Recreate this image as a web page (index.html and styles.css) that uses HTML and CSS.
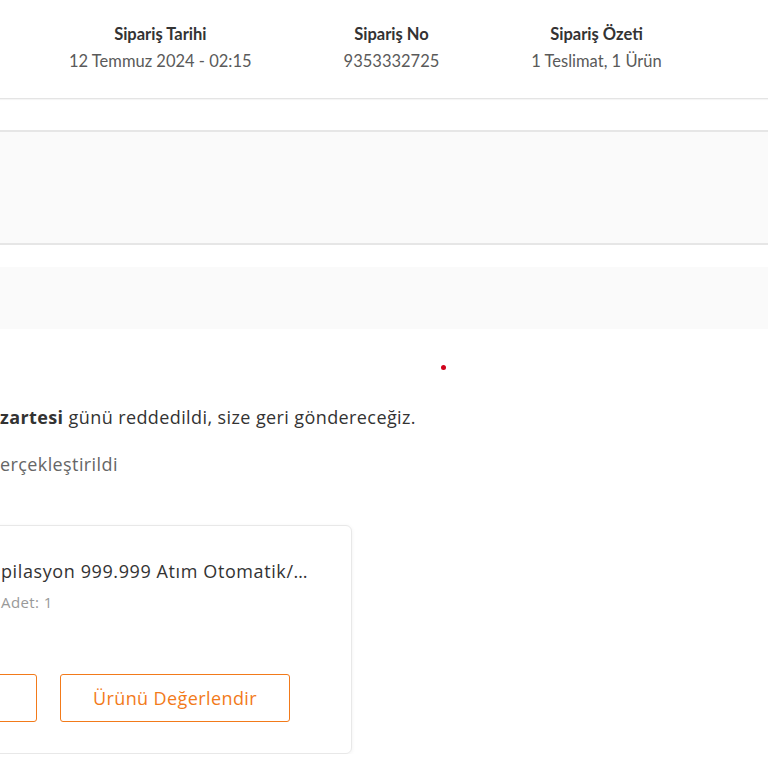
FILE: index.html
```html
<!DOCTYPE html>
<html lang="tr">
<head>
<meta charset="utf-8">
<link rel="stylesheet" href="styles.css">
</head>
<body>
<header class="order-head">
  <div class="info">
    <div class="info-title">Sipariş Tarihi</div>
    <div class="info-value">12 Temmuz 2024 - 02:15</div>
  </div>
  <div class="info">
    <div class="info-title">Sipariş No</div>
    <div class="info-value">9353332725</div>
  </div>
  <div class="info">
    <div class="info-title">Sipariş Özeti</div>
    <div class="info-value">1 Teslimat, 1 Ürün</div>
  </div>
</header>

<section class="panel-bordered"></section>
<section class="panel-plain"></section>

<div class="status-dot-row"><span class="status-dot"></span></div>

<p class="status-text"><b>zartesi</b> günü reddedildi, size geri göndereceğiz.</p>
<p class="status-sub">erçekleştirildi</p>

<div class="product-card">
  <div class="product-info">
    <div class="product-name">pilasyon 999.999 Atım Otomatik/…</div>
    <div class="product-qty">Adet: 1</div>
  </div>
  <div class="product-actions">
    <button class="btn-outline"></button>
    <button class="btn-outline">Ürünü Değerlendir</button>
  </div>
</div>
</body>
</html>
```

FILE: styles.css
```css
* { box-sizing: border-box; }
html, body { margin: 0; padding: 0; background: #fff; }
body {
  font-family: "Open Sans", Arial, sans-serif;
  color: #333;
  width: 768px;
  overflow: hidden;
}

.order-head {
  display: flex;
  gap: 92px;
  padding: 23px 0 26px 69px;
  border-bottom: 1px solid #e4e4e4;
  box-shadow: 0 1px 1px rgba(0,0,0,0.04);
  font-family: Lato, "Open Sans", Arial, sans-serif;
}
.info { text-align: center; }
.info-title {
  font-size: 16.5px;
  font-weight: 700;
  line-height: 22px;
  color: #333;
}
.info-value {
  margin-top: 5px;
  font-size: 16.5px;
  line-height: 22px;
  color: #5a5a5a;
}

.panel-bordered {
  margin-top: 31px;
  height: 115px;
  background: #fafafa;
  border-top: 2px solid #e6e6e6;
  border-bottom: 2px solid #e6e6e6;
}
.panel-plain {
  margin-top: 22px;
  height: 62px;
  background: #fafafa;
}

.status-dot-row {
  height: 76px;
  position: relative;
}
.status-dot {
  position: absolute;
  left: 441px;
  top: 36px;
  width: 5px;
  height: 5px;
  border-radius: 50%;
  background: #d0021b;
}

.status-text {
  margin: 0;
  font-size: 18px;
  letter-spacing: 0.4px;
  line-height: 24px;
  color: #333;
}
.status-text b { font-weight: 700; }
.status-sub {
  margin: 23px 0 0;
  font-size: 18px;
  letter-spacing: 0.4px;
  line-height: 24px;
  color: #666;
}

.product-card {
  margin: 49px 0 0 -200px;
  width: 552px;
  border: 1px solid #e8e8e8;
  border-radius: 6px;
  box-shadow: 0 1px 4px rgba(0,0,0,0.06);
  padding: 33px 0 31px;
}
.product-info { padding-left: 200px; }
.product-name {
  font-size: 18px;
  letter-spacing: 0.6px;
  line-height: 24px;
  color: #333;
  white-space: nowrap;
}
.product-qty {
  margin-top: 9px;
  font-size: 15px;
  letter-spacing: 0.4px;
  line-height: 20px;
  color: #999;
}
.product-actions {
  display: flex;
  justify-content: flex-end;
  gap: 23px;
  padding-right: 61px;
  margin-top: 62px;
}
.btn-outline {
  width: 230px;
  height: 48px;
  border: 1px solid #f27a1a;
  border-radius: 3px;
  background: #fff;
  color: #f27a1a;
  font-family: inherit;
  font-size: 18px;
  letter-spacing: 0.4px;
  cursor: pointer;
}
```
